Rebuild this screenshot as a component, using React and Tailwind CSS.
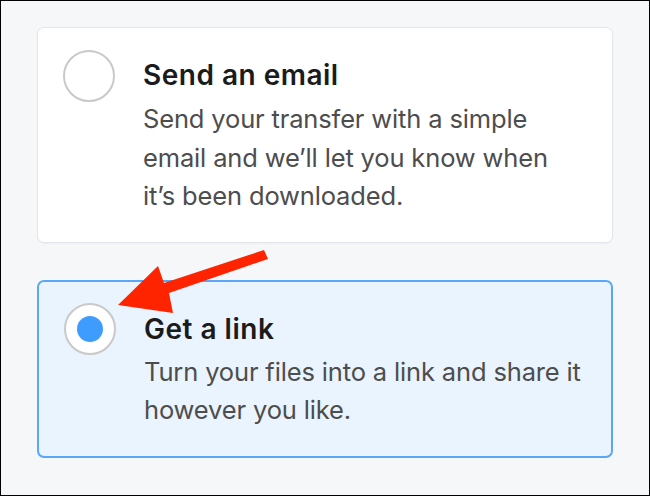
import React from 'react';

const options = [
  {
    id: 'email',
    title: 'Send an email',
    lines: ['Send your transfer with a simple', 'email and we\u2019ll let you know when', 'it\u2019s been downloaded.'],
  },
  {
    id: 'link',
    title: 'Get a link',
    lines: ['Turn your files into a link and share it', 'however you like.'],
  },
];

function Radio({ checked }) {
  return (
    <div className="w-[52px] h-[52px] shrink-0 rounded-full border-2 border-[#c9c9c9] bg-white flex items-center justify-center">
      {checked && <div className="w-[26px] h-[26px] rounded-full bg-[#3f9cff]" />}
    </div>
  );
}

function Option({ opt, selected }) {
  const cls = selected
    ? 'border-2 border-[#5aa7f9] bg-[#eaf4fe] pt-[21px] pl-[25px] pb-[26px]'
    : 'border border-[#e4e6ea] bg-white pt-[22px] pl-[25px] pb-[26px] shadow-[0_1px_2px_rgba(0,0,0,0.04)]';
  return (
    <div className={`w-[576px] rounded-[7px] flex items-start gap-[28px] ${cls}`}>
      <Radio checked={selected} />
      <div className={selected ? 'pt-[6px]' : 'pt-[5px]'}>
        <div className="text-[28px] leading-[40px] font-semibold text-[#1b1b1b] tracking-[0.5px]">{opt.title}</div>
        <div className={`${selected ? 'mt-[4px]' : 'mt-[5px]'} text-[25.5px] leading-[38.5px] text-[#4d4d4d] tracking-[-0.15px] whitespace-nowrap`}>
          {opt.lines.map((l) => (
            <div key={l}>{l}</div>
          ))}
        </div>
      </div>
    </div>
  );
}

export default function App() {
  return (
    <div className="relative w-[650px] h-[496px] border border-black bg-[#f6f7f9] px-[36px] pt-[26px] flex flex-col gap-[37px] font-['Inter',sans-serif] antialiased">
      <Option opt={options[0]} selected={false} />
      <Option opt={options[1]} selected />
      {/* red annotation arrow */}
      <svg className="absolute left-0 top-0 pointer-events-none" width="650" height="496" viewBox="0 0 650 496">
        <polygon
          points="117,304 157,265 163,282 263,249 267,258 168,292 172,312"
          fill="#ff2400"
        />
      </svg>
    </div>
  );
}
